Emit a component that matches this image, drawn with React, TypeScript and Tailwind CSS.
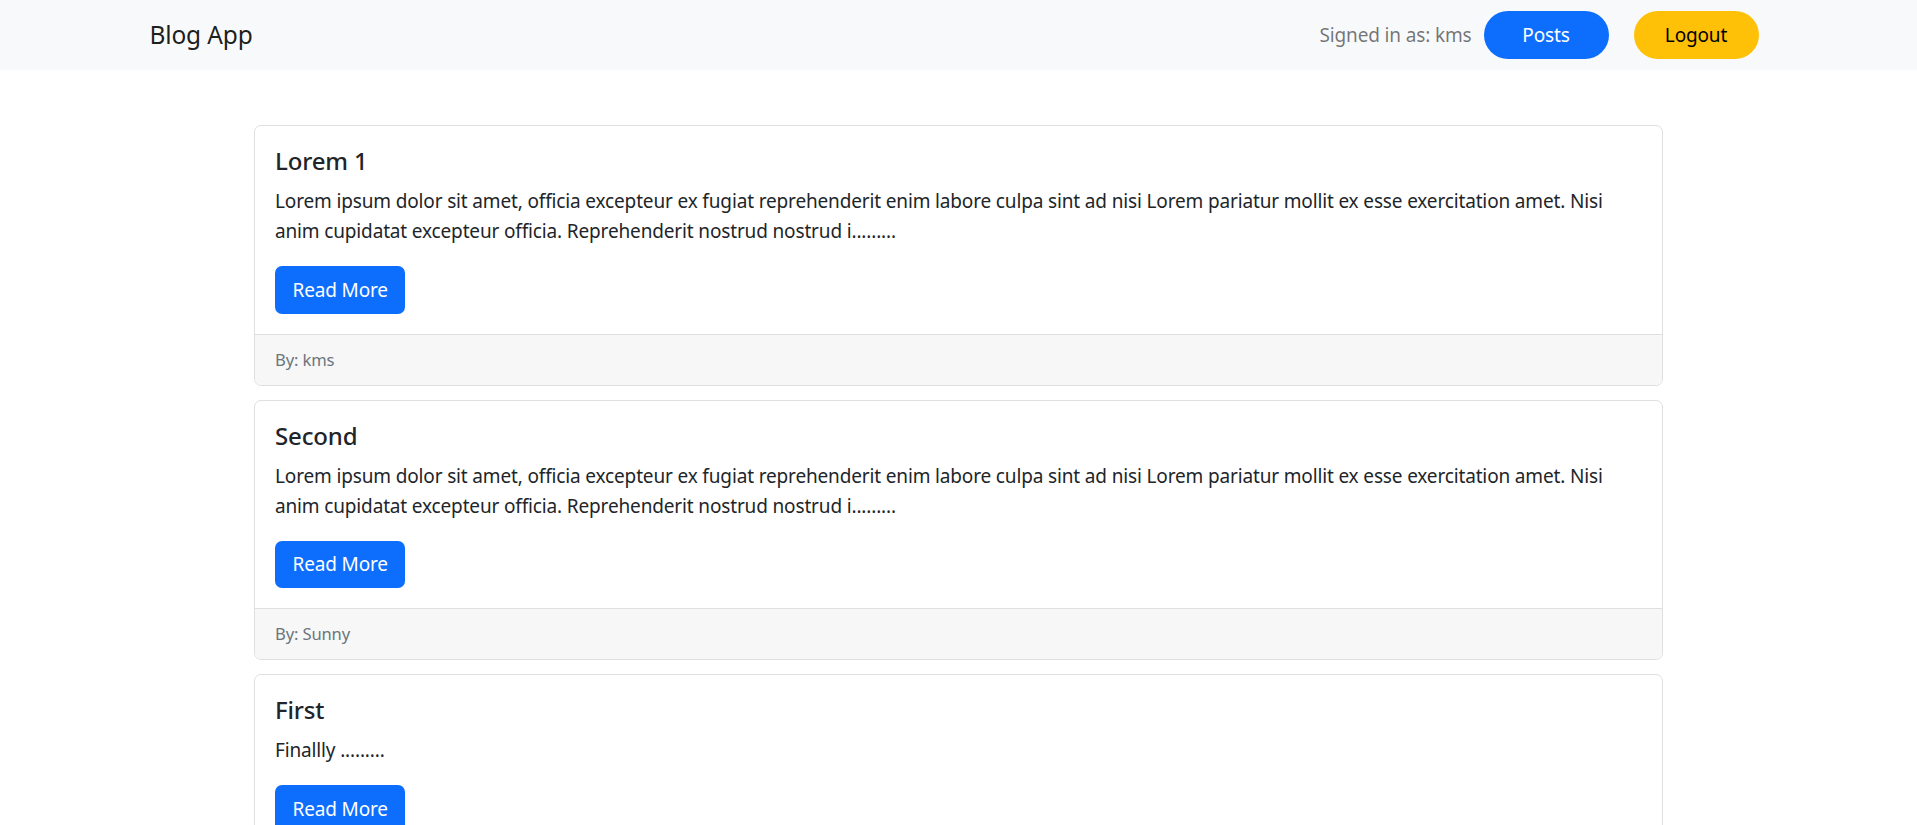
import React from "react";

const posts = [
  {
    title: "Lorem 1",
    body: "Lorem ipsum dolor sit amet, officia excepteur ex fugiat reprehenderit enim labore culpa sint ad nisi Lorem pariatur mollit ex esse exercitation amet. Nisi anim cupidatat excepteur officia. Reprehenderit nostrud nostrud i.........",
    author: "kms",
  },
  {
    title: "Second",
    body: "Lorem ipsum dolor sit amet, officia excepteur ex fugiat reprehenderit enim labore culpa sint ad nisi Lorem pariatur mollit ex esse exercitation amet. Nisi anim cupidatat excepteur officia. Reprehenderit nostrud nostrud i.........",
    author: "Sunny",
  },
  {
    title: "First",
    body: "Finallly .........",
    author: "kms",
  },
];

function PostCard({ title, body, author }: { title: string; body: string; author: string }) {
  return (
    <div className="rounded-[7px] border border-[#dfdfdf] bg-white">
      <div className="p-[20px]">
        <h5 className="text-[24px] leading-[30px] font-medium text-[#212529] mb-[10px]">{title}</h5>
        <p className="text-[19px] leading-[30px] text-[#212529] mb-[20px]">{body}</p>
        <button className="h-[47.5px] px-[17.5px] rounded-[7px] bg-[#0d6efd] text-white text-[19px] leading-[30px]">
          Read More
        </button>
      </div>
      <div className="border-t border-[#dfdfdf] bg-[#f7f7f7] px-[20px] py-[10px] rounded-b-[7px]">
        <small className="text-[16.6px] leading-[30px] text-[#6c757d]">By: {author}</small>
      </div>
    </div>
  );
}

export default function App() {
  return (
    <div className="min-h-screen bg-white font-['Noto_Sans',sans-serif] tracking-[-0.15px] text-[#212529]">
      <nav className="bg-[#f8f9fa] h-[70px] flex items-center">
        <div className="w-[1620px] mx-auto flex items-center justify-between pl-[1px] pr-[10px]">
          <span className="text-[24.5px] leading-[38px] text-black/90">Blog App</span>
          <div className="flex items-center">
            <span className="text-[19px] leading-[30px] text-black/55 mr-[12px]">Signed in as: kms</span>
            <button className="w-[125px] h-[48px] rounded-full bg-[#0d6efd] text-white text-[19px]">Posts</button>
            <button className="w-[125px] h-[48px] rounded-full bg-[#ffc107] text-black text-[19px] ml-[25px]">
              Logout
            </button>
          </div>
        </div>
      </nav>
      <main className="w-[1409px] mx-auto pt-[55px] flex flex-col gap-[14px] pb-[40px]">
        {posts.map((p) => (
          <PostCard key={p.title} {...p} />
        ))}
      </main>
    </div>
  );
}
